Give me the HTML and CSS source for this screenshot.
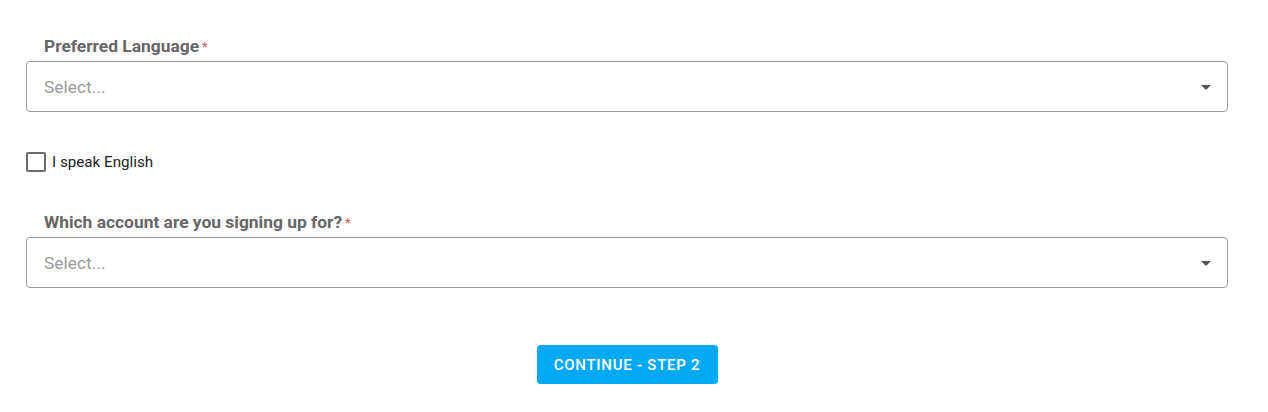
FILE: index.html
```html
<!DOCTYPE html>
<html>
<head>
<meta charset="utf-8">
<link rel="stylesheet" href="styles.css">
</head>
<body>
<form class="form">
  <div class="field">
    <label class="label">Preferred Language<span class="req">*</span></label>
    <div class="select">
      <span class="placeholder">Select...</span>
      <svg class="arrow" width="10" height="5" viewBox="0 0 10 5"><path d="M0 0 L10 0 L5 5 Z" fill="#555"/></svg>
    </div>
  </div>
  <label class="check">
    <span class="box"></span>
    <span class="check-text">I speak English</span>
  </label>
  <div class="field">
    <label class="label">Which account are you signing up for?<span class="req">*</span></label>
    <div class="select">
      <span class="placeholder">Select...</span>
      <svg class="arrow" width="10" height="5" viewBox="0 0 10 5"><path d="M0 0 L10 0 L5 5 Z" fill="#555"/></svg>
    </div>
  </div>
  <div class="actions">
    <button type="button" class="btn">CONTINUE - STEP 2</button>
  </div>
</form>
</body>
</html>
```
FILE: styles.css
```css
html, body {
  margin: 0;
  padding: 0;
  background: #fff;
  font-family: Roboto, "Liberation Sans", sans-serif;
}
.form {
  width: 1202px;
  margin-left: 26px;
  padding-top: 36px;
  display: flex;
  flex-direction: column;
}
.field {
  display: flex;
  flex-direction: column;
  gap: 5px;
}
.label {
  display: block;
  height: 20px;
  padding-left: 18px;
  font-size: 17.4px;
  line-height: 20px;
  font-weight: 700;
  color: #666;
}
.req {
  color: #e55353;
  font-size: 13px;
  line-height: 0;
  font-weight: 400;
  margin-left: 3px;
  vertical-align: 1px;
}
.select {
  height: 51px;
  box-sizing: border-box;
  border: 1px solid #9a9a9a;
  border-radius: 4px;
  display: flex;
  align-items: center;
  justify-content: space-between;
  padding: 0 16px 0 17px;
}
.placeholder {
  font-size: 17.4px;
  color: #9a9a9a;
}
.arrow {
  display: block;
  margin-top: 2px;
}
.check {
  display: flex;
  align-items: center;
  gap: 6px;
  margin-top: 40px;
  margin-bottom: 40px;
}
.box {
  width: 20px;
  height: 20px;
  box-sizing: border-box;
  border: 2px solid #6b6b6b;
  border-radius: 2px;
}
.check-text {
  font-size: 15.2px;
  color: #222;
}
.actions {
  display: flex;
  justify-content: center;
  margin-top: 57px;
}
.btn {
  width: 181px;
  height: 39px;
  border: none;
  border-radius: 4px;
  background: #03a9f4;
  color: #fff;
  font-family: Roboto, "Liberation Sans", sans-serif;
  font-size: 15px;
  font-weight: 500;
  letter-spacing: 0.75px;
  box-shadow: 0 1px 3px rgba(0,0,0,0.15);
  padding: 0;
}
```
